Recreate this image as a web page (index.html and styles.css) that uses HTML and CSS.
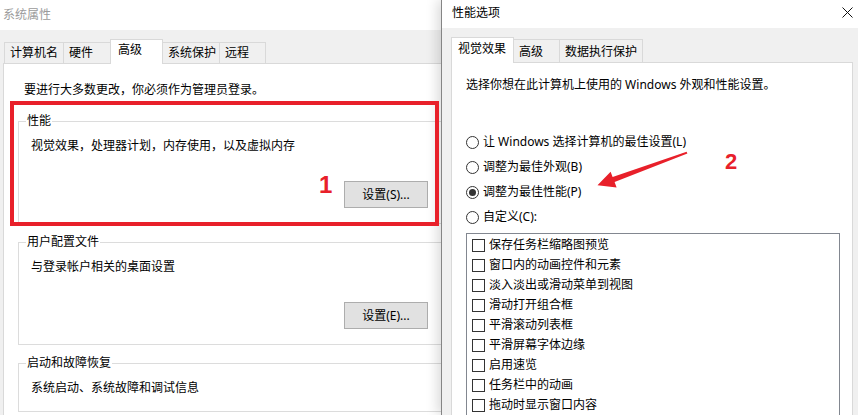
FILE: index.html
```html
<!DOCTYPE html>
<html lang="zh-CN">
<head>
<meta charset="utf-8">
<title>系统属性 - 性能选项</title>
<link rel="stylesheet" href="styles.css">
</head>
<body>
<section class="win win-sys">
  <div class="titlebar">系统属性</div>
  <div class="win-body">
    <div class="tabs">
      <div class="tab tab-a">计算机名</div>
      <div class="tab tab-b">硬件</div>
      <div class="tab tab-c tab--active">高级</div>
      <div class="tab tab-d">系统保护</div>
      <div class="tab tab-e">远程</div>
    </div>
    <div class="panel">
      <p class="note">要进行大多数更改，你必须作为管理员登录。</p>
      <fieldset class="group">
        <legend>性能</legend>
        <p class="group-text">视觉效果，处理器计划，内存使用，以及虚拟内存</p>
        <div class="btn-row"><button class="btn" type="button">设置(S)...</button></div>
      </fieldset>
      <fieldset class="group">
        <legend>用户配置文件</legend>
        <p class="group-text">与登录帐户相关的桌面设置</p>
        <div class="btn-row"><button class="btn" type="button">设置(E)...</button></div>
      </fieldset>
      <fieldset class="group">
        <legend>启动和故障恢复</legend>
        <p class="group-text">系统启动、系统故障和调试信息</p>
      </fieldset>
    </div>
  </div>
</section>

<section class="win win-perf">
  <div class="titlebar">
    <span>性能选项</span>
    <svg class="close" width="11" height="11" viewBox="0 0 11 11"><path d="M0.5 0.5 L10.5 10.5 M10.5 0.5 L0.5 10.5" stroke="#111" stroke-width="1" fill="none"/></svg>
  </div>
  <div class="win-body">
    <div class="tabs">
      <div class="tab tab-f tab--active">视觉效果</div>
      <div class="tab tab-g">高级</div>
      <div class="tab tab-h">数据执行保护</div>
    </div>
    <div class="panel">
      <p class="note">选择你想在此计算机上使用的 Windows 外观和性能设置。</p>
      <div class="radios">
        <div class="radio-row"><span class="radio"></span>让 Windows 选择计算机的最佳设置(L)</div>
        <div class="radio-row"><span class="radio"></span>调整为最佳外观(B)</div>
        <div class="radio-row"><span class="radio radio--on"></span>调整为最佳性能(P)</div>
        <div class="radio-row"><span class="radio"></span>自定义(C):</div>
      </div>
      <div class="checklist">
        <div class="check-row"><span class="check"></span>保存任务栏缩略图预览</div>
        <div class="check-row"><span class="check"></span>窗口内的动画控件和元素</div>
        <div class="check-row"><span class="check"></span>淡入淡出或滑动菜单到视图</div>
        <div class="check-row"><span class="check"></span>滑动打开组合框</div>
        <div class="check-row"><span class="check"></span>平滑滚动列表框</div>
        <div class="check-row"><span class="check"></span>平滑屏幕字体边缘</div>
        <div class="check-row"><span class="check"></span>启用速览</div>
        <div class="check-row"><span class="check"></span>任务栏中的动画</div>
        <div class="check-row"><span class="check"></span>拖动时显示窗口内容</div>
      </div>
    </div>
  </div>
</section>

<div class="annot">
  <div class="redbox"></div>
  <span class="num num-1">1</span>
  <span class="num num-2">2</span>
  <svg class="arrow" width="858" height="415" viewBox="0 0 858 415">
    <polygon points="686.6,151.8 612.6,176.9 610.6,171.8 597.5,185.2 616.6,187.4 614.6,182.0 687.4,153.6" fill="#e8202a"/>
  </svg>
</div>
</body>
</html>
```
FILE: styles.css
```css
* { box-sizing: border-box; }
html, body { margin: 0; padding: 0; }
body {
  width: 858px;
  height: 415px;
  overflow: hidden;
  position: relative;
  background: #f0f0f0;
  font-family: "Noto Sans", "Noto Sans CJK SC", sans-serif;
  font-size: 12px;
  line-height: 16px;
  color: #000;
}
p { margin: 0; }

.win {
  position: absolute;
  top: 0;
  bottom: 0;
  display: flex;
  flex-direction: column;
  background: #f0f0f0;
}
.win-sys { left: 0; width: 470px; }
.win-perf {
  left: 441px;
  width: 430px;
  border-left: 1px solid #858585;
  box-shadow: -3px 0 12px rgba(0, 0, 0, 0.16);
}

.titlebar { background: #fff; flex: none; white-space: nowrap; }
.win-sys .titlebar { height: 30px; padding: 7px 0 0 3px; color: #9b9b9b; }
.win-perf .titlebar {
  height: 28px;
  padding: 5px 18px 0 10px;
  display: flex;
  justify-content: space-between;
  align-items: flex-start;
}
.close { margin-top: 2px; }

.win-body { flex: 1; display: flex; flex-direction: column; min-height: 0; }
.win-sys .win-body { padding: 9px 8px 0 3px; }
.win-perf .win-body { padding: 9px 18px 0 9px; }

.tabs { display: flex; align-items: flex-end; flex: none; position: relative; z-index: 1; }
.win-sys .tabs { height: 24px; padding-left: 2px; }
.win-perf .tabs { height: 25px; padding-left: 1px; }

.tab {
  border: 1px solid #d9d9d9;
  border-bottom: 0;
  background: #f0f0f0;
  margin-left: -1px;
  white-space: nowrap;
}
.win-sys .tab { height: 21px; padding: 2px 0 0 5px; }
.win-perf .tab { height: 23px; padding: 4px 0 0 5px; }
.tab--active { background: #fff; margin-bottom: -1px; }
.win-sys .tab--active { height: 25px; padding: 2px 0 0 7px; }
.win-perf .tab--active { height: 26px; padding: 3px 0 0 6px; }

.tab-a { width: 60px; }
.tab-b { width: 48px; padding-left: 6px; }
.tab-c { width: 53px; }
.tab-d { width: 58px; }
.tab-e { width: 47px; padding-left: 6px; }
.tab-f { width: 63px; }
.tab-g { width: 47px; }
.tab-h { width: 84px; padding-left: 6px; }

.panel {
  flex: 1;
  background: #fff;
  border: 1px solid #d9d9d9;
  border-bottom: 0;
  min-height: 0;
}
.win-sys .panel { padding: 18px 14px 0 14px; }
.win-sys .note { padding-left: 6px; }
.win-perf .panel { padding: 14px 12px 0 14px; }

.group {
  margin: 15px 0 0;
  padding: 0 18px 15px 12px;
  border: 1px solid #dcdcdc;
  min-width: 0;
}
.group + .group { margin-top: 10px; }
.group legend { padding: 0 1px; margin-left: -5px; }
.group-text { margin-top: 9px; }
.btn-row { display: flex; justify-content: flex-end; margin-top: 27px; }
.btn {
  width: 84px;
  height: 27px;
  padding: 0;
  border: 1px solid #adadad;
  background: #e1e1e1;
  font: inherit;
  color: #000;
}

.radios { margin-top: 41px; display: flex; flex-direction: column; gap: 9px; }
.radio-row { display: flex; align-items: center; gap: 4px; height: 16px; white-space: nowrap; }
.radio {
  width: 13px;
  height: 13px;
  border: 1px solid #333;
  border-radius: 50%;
  background: #fff;
  flex: none;
  display: flex;
  align-items: center;
  justify-content: center;
}
.radio--on::after {
  content: "";
  width: 7px;
  height: 7px;
  border-radius: 50%;
  background: #333;
}

.checklist {
  margin-top: 8px;
  border: 1px solid #828790;
  padding: 1px 0 0 5px;
  height: 200px;
}
.check-row { display: flex; align-items: center; gap: 4px; height: 20px; white-space: nowrap; }
.check { width: 13px; height: 13px; border: 1px solid #333; background: #fff; flex: none; }

.annot { position: absolute; inset: 0; pointer-events: none; }
.redbox {
  position: absolute;
  left: 10px;
  top: 101px;
  width: 429px;
  height: 125px;
  border: 4px solid #e8202a;
}
.num {
  position: absolute;
  font-family: "Liberation Sans", Arial, sans-serif;
  font-weight: 700;
  color: #e8202a;
  line-height: 24px;
}
.num-1 { left: 319px; top: 173px; font-size: 24px; }
.num-2 { left: 725px; top: 150px; font-size: 22px; }
.arrow { position: absolute; left: 0; top: 0; }
```
